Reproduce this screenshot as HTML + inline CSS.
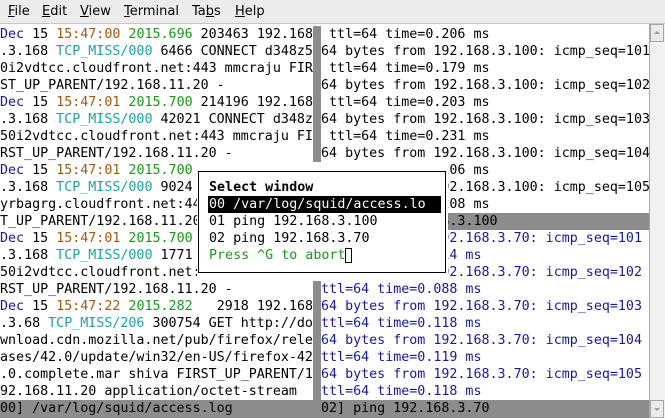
<!DOCTYPE html>
<html><head><style>
body{margin:0;width:665px;height:418px;overflow:hidden;background:#fff;position:relative;font-family:"DejaVu Sans Mono",monospace;}
#menu{position:absolute;left:0;top:0;width:665px;height:23px;background:#edeceb;border-bottom:1px solid #c8c6c3;font-family:"DejaVu Sans","Liberation Sans",sans-serif;font-size:13px;color:#000;}
#menu span{position:absolute;top:4px}
pre{margin:0;position:absolute;font-family:"DejaVu Sans Mono",monospace;font-size:13.34px;line-height:17px;color:#000;white-space:pre;overflow:hidden;}
.b{color:#1a1a8c}.t{color:#9c5a14}.g{color:#1e951e}.c{color:#24a0a0}
#sb{position:absolute;left:649px;top:24px;width:15px;height:394px;background:#f2f1f0;border-left:1px solid #a9a7a4;}
</style></head><body>
<div id="menu">
<span style="left:8px"><u>F</u>ile</span>
<span style="left:42px"><u>E</u>dit</span>
<span style="left:80px"><u>V</u>iew</span>
<span style="left:124px"><u>T</u>erminal</span>
<span style="left:192px">Ta<u>b</u>s</span>
<span style="left:235px"><u>H</u>elp</span>
</div>
<pre style="left:0;top:26px;width:313px;height:374px"><span class="b">Dec</span> 15 <span class="t">15:47:00</span> <span class="g">2015.696</span> 203463 192.168
.3.168 <span class="c">TCP_MISS/000</span> 6466 CONNECT d348z5
0i2vdtcc.cloudfront.net:443 mmcraju FIR
ST_UP_PARENT/192.168.11.20 -
<span class="b">Dec</span> 15 <span class="t">15:47:01</span> <span class="g">2015.700</span> 214196 192.168
.3.168 <span class="c">TCP_MISS/000</span> 42021 CONNECT d348z
50i2vdtcc.cloudfront.net:443 mmcraju FI
RST_UP_PARENT/192.168.11.20 -
<span class="b">Dec</span> 15 <span class="t">15:47:01</span> <span class="g">2015.700</span> 214196 192.168
.3.168 <span class="c">TCP_MISS/000</span> 9024 CONNECT d348z5
yrbagrg.cloudfront.net:443 mmcraju FIRS
T_UP_PARENT/192.168.11.20 -
<span class="b">Dec</span> 15 <span class="t">15:47:01</span> <span class="g">2015.700</span> 214196 192.168
.3.168 <span class="c">TCP_MISS/000</span> 1771 CONNECT d348z5
50i2vdtcc.cloudfront.net:443 mmcraju FI
RST_UP_PARENT/192.168.11.20 -
<span class="b">Dec</span> 15 <span class="t">15:47:22</span> <span class="g">2015.282</span>   2918 192.168
.3.68 <span class="c">TCP_MISS/206</span> 300754 GET http://do
wnload.cdn.mozilla.net/pub/firefox/rele
ases/42.0/update/win32/en-US/firefox-42
.0.complete.mar shiva FIRST_UP_PARENT/1
92.168.11.20 application/octet-stream</pre>
<div style="position:absolute;left:313px;top:26px;width:8px;height:374px;background:#8c8c8c"></div>
<div style="position:absolute;left:321px;top:213px;width:328px;height:17px;background:#8c8c8c"></div>
<pre style="left:321px;top:26px;width:328px;height:374px"> ttl=64 time=0.206 ms
64 bytes from 192.168.3.100: icmp_seq=101
 ttl=64 time=0.179 ms
64 bytes from 192.168.3.100: icmp_seq=102
 ttl=64 time=0.203 ms
64 bytes from 192.168.3.100: icmp_seq=103
 ttl=64 time=0.231 ms
64 bytes from 192.168.3.100: icmp_seq=104
 ttl=64 time=0.206 ms
64 bytes from 192.168.3.100: icmp_seq=105
 ttl=64 time=0.208 ms
01] ping 192.168.3.100
<span class="b">64 bytes from 192.168.3.70: icmp_seq=101
ttl=64 time=0.114 ms
64 bytes from 192.168.3.70: icmp_seq=102
ttl=64 time=0.088 ms
64 bytes from 192.168.3.70: icmp_seq=103
ttl=64 time=0.118 ms
64 bytes from 192.168.3.70: icmp_seq=104
ttl=64 time=0.119 ms
64 bytes from 192.168.3.70: icmp_seq=105
ttl=64 time=0.118 ms</span></pre>
<div style="position:absolute;left:0;top:400px;width:649px;height:18px;background:#8c8c8c"></div>
<pre style="left:0;top:400px;width:649px;height:18px">00] /var/log/squid/access.log           02] ping 192.168.3.70</pre>
<div style="position:absolute;left:197px;top:162px;width:251px;height:119px;background:#fff"></div>
<div style="position:absolute;left:198px;top:171px;width:246px;height:100px;border:1px solid #000"></div>
<div style="position:absolute;left:208px;top:196px;width:233px;height:17px;background:#000"></div>
<pre style="left:209px;top:179px;width:236px;height:88px"><b>Select window</b>
<span style="color:#fff">00 /var/log/squid/access.lo</span>
01 ping 192.168.3.100
02 ping 192.168.3.70
<span class="g">Press ^G to abort</span></pre>
<div style="position:absolute;left:345px;top:248px;width:7px;height:15px;border:1px solid #000;box-sizing:border-box"></div>
<div id="sb"><div style="position:absolute;left:0;top:0;width:14px;height:18px;border:1px solid #a9a7a4;background:#eceae8;box-sizing:border-box"></div>
<div style="position:absolute;left:4px;top:7px;width:0;height:0;border-left:3px solid transparent;border-right:3px solid transparent;border-bottom:3px solid #999"></div>
<div style="position:absolute;left:0;bottom:0;width:14px;height:18px;border:1px solid #a9a7a4;background:#eceae8;box-sizing:border-box"></div>
<div style="position:absolute;left:4px;bottom:7px;width:0;height:0;border-left:3px solid transparent;border-right:3px solid transparent;border-top:3px solid #999"></div></div>
</body></html>
